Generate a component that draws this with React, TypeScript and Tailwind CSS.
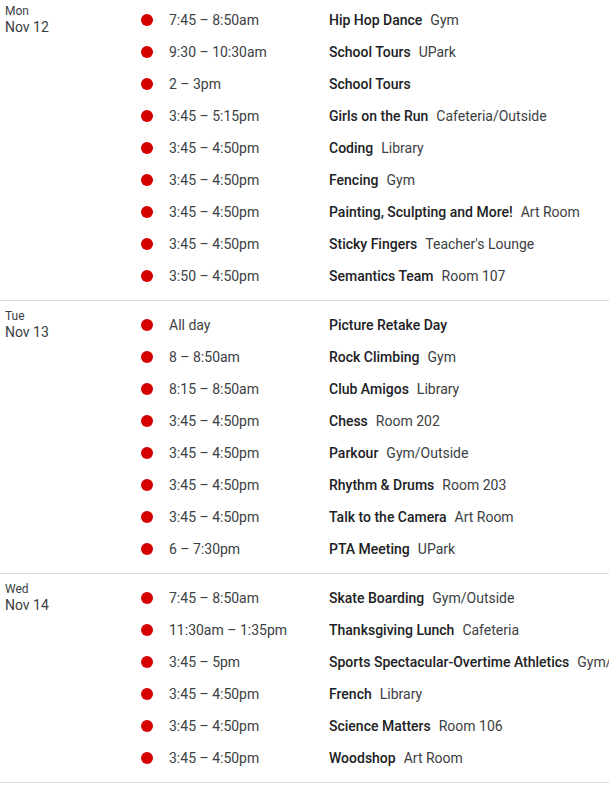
import React from "react";

type Ev = { time: string; title: string; loc?: string };
type Day = { dow: string; date: string; events: Ev[] };

const days: Day[] = [
  {
    dow: "Mon",
    date: "Nov 12",
    events: [
      { time: "7:45 – 8:50am", title: "Hip Hop Dance", loc: "Gym" },
      { time: "9:30 – 10:30am", title: "School Tours", loc: "UPark" },
      { time: "2 – 3pm", title: "School Tours" },
      { time: "3:45 – 5:15pm", title: "Girls on the Run", loc: "Cafeteria/Outside" },
      { time: "3:45 – 4:50pm", title: "Coding", loc: "Library" },
      { time: "3:45 – 4:50pm", title: "Fencing", loc: "Gym" },
      { time: "3:45 – 4:50pm", title: "Painting, Sculpting and More!", loc: "Art Room" },
      { time: "3:45 – 4:50pm", title: "Sticky Fingers", loc: "Teacher's Lounge" },
      { time: "3:50 – 4:50pm", title: "Semantics Team", loc: "Room 107" },
    ],
  },
  {
    dow: "Tue",
    date: "Nov 13",
    events: [
      { time: "All day", title: "Picture Retake Day" },
      { time: "8 – 8:50am", title: "Rock Climbing", loc: "Gym" },
      { time: "8:15 – 8:50am", title: "Club Amigos", loc: "Library" },
      { time: "3:45 – 4:50pm", title: "Chess", loc: "Room 202" },
      { time: "3:45 – 4:50pm", title: "Parkour", loc: "Gym/Outside" },
      { time: "3:45 – 4:50pm", title: "Rhythm & Drums", loc: "Room 203" },
      { time: "3:45 – 4:50pm", title: "Talk to the Camera", loc: "Art Room" },
      { time: "6 – 7:30pm", title: "PTA Meeting", loc: "UPark" },
    ],
  },
  {
    dow: "Wed",
    date: "Nov 14",
    events: [
      { time: "7:45 – 8:50am", title: "Skate Boarding", loc: "Gym/Outside" },
      { time: "11:30am – 1:35pm", title: "Thanksgiving Lunch", loc: "Cafeteria" },
      { time: "3:45 – 5pm", title: "Sports Spectacular-Overtime Athletics", loc: "Gym/Outside" },
      { time: "3:45 – 4:50pm", title: "French", loc: "Library" },
      { time: "3:45 – 4:50pm", title: "Science Matters", loc: "Room 106" },
      { time: "3:45 – 4:50pm", title: "Woodshop", loc: "Art Room" },
    ],
  },
];

export default function App() {
  return (
    <div
      className="w-[609px] h-[785px] overflow-hidden bg-white text-[#202124]"
      style={{ fontFamily: "Roboto, 'Liberation Sans', sans-serif" }}
    >
      <div className="-mt-[4px]">
        {days.map((d) => (
          <div key={d.dow} className="flex border-b border-[#dadce0]">
            <div className="w-[141px] shrink-0 pl-[5px] pt-[8px] flex flex-col">
              <span className="text-[12px] leading-[14px] text-[#3c4043]">{d.dow}</span>
              <span className="text-[14px] leading-[18px] text-[#3c4043]">{d.date}</span>
            </div>
            <div className="flex flex-col py-2 min-w-0">
              {d.events.map((e, i) => (
                <div key={i} className="h-8 flex items-center whitespace-nowrap text-[14px]">
                  <span className="w-3 h-3 rounded-full bg-[#d50000] shrink-0 mr-4" />
                  <span className="w-[160px] shrink-0 text-[#3c4043]">{e.time}</span>
                  <span className="font-medium text-[#202124]">{e.title}</span>
                  {e.loc && <span className="ml-2 text-[#3c4043]">{e.loc}</span>}
                </div>
              ))}
            </div>
          </div>
        ))}
      </div>
    </div>
  );
}
